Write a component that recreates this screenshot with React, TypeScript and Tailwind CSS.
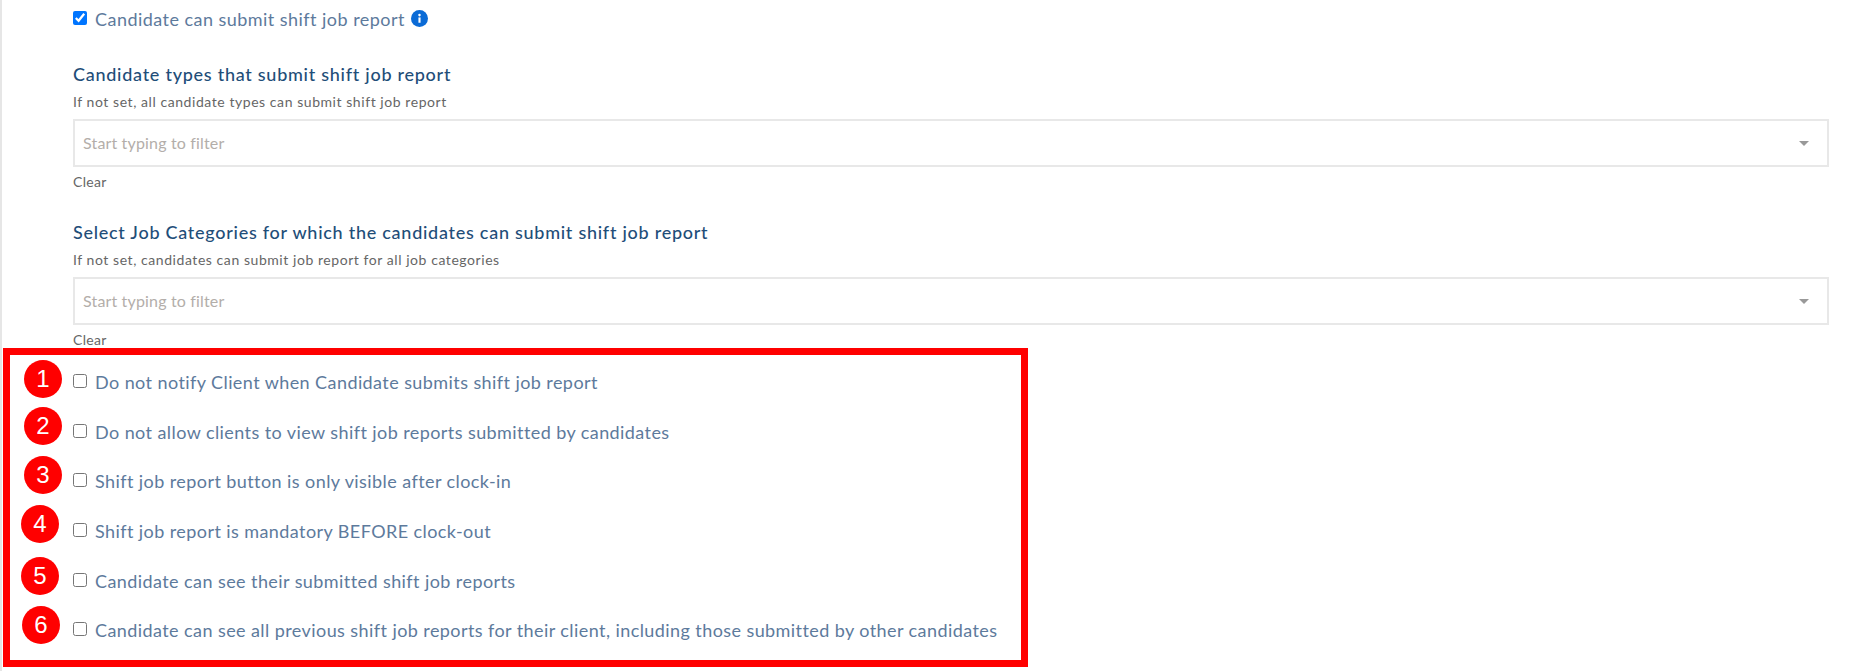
const FONT = "font-['Lato','Liberation_Sans',sans-serif]";

const OPTIONS = [
  { text: "Do not notify Client when Candidate submits shift job report", badge: "left-[14px] -translate-y-[4px]" },
  { text: "Do not allow clients to view shift job reports submitted by candidates", badge: "left-[14px] -translate-y-[6px]" },
  { text: "Shift job report button is only visible after clock-in", badge: "left-[14px] -translate-y-[7px]" },
  { text: "Shift job report is mandatory BEFORE clock-out", badge: "left-[11px] -translate-y-[8px]" },
  { text: "Candidate can see their submitted shift job reports", badge: "left-[11px] -translate-y-[5px]" },
  {
    text: "Candidate can see all previous shift job reports for their client, including those submitted by other candidates",
    badge: "left-[12px] -translate-y-[6px]",
  },
];

function FilterField({ title, hint }: { title: string; hint: string }) {
  return (
    <div className="pl-[71px] pr-[21px]">
      <h3 className="text-[18px] leading-[24px] font-medium text-[#1f4e79] tracking-[0.73px]">{title}</h3>
      <p className="mt-[6px] text-[14px] leading-[20px] text-[#666666] tracking-[0.56px]">{hint}</p>
      <div className="mt-[7px] flex h-[48px] items-center justify-between border-2 border-[#e8e8e8] pl-[8px] pr-[18px]">
        <span className="text-[16px] text-[#b3aeaa] tracking-[0.16px]">Start typing to filter</span>
        <span className="h-0 w-0 border-x-[5px] border-t-[5px] border-x-transparent border-t-[#999999]" />
      </div>
      <p className="mt-[5px] text-[14px] leading-[20px] text-[#666666] tracking-[0.3px]">Clear</p>
    </div>
  );
}

export default function App() {
  return (
    <div className={`${FONT} h-[671px] w-[1850px] overflow-hidden border-l-2 border-[#e6e6e6] bg-white`}>
      <label className="flex items-center gap-[8px] pl-[71px] pt-[7px] text-[18px] leading-[24px] text-[#5d7a9c]">
        <input type="checkbox" defaultChecked className="m-0 -mt-[3px] h-[14px] w-[14px]" />
        <span className="tracking-[0.46px]">Candidate can submit shift job report</span>
        <svg viewBox="0 0 16 16" className="-ml-[2px] -mt-[1px] h-[17px] w-[17px]">
          <circle cx="8" cy="8" r="8" fill="#0b6bd6" />
          <rect x="7" y="7" width="2" height="5" fill="#fff" />
          <circle cx="8" cy="4.8" r="1.2" fill="#fff" />
        </svg>
      </label>
      <div className="mt-[31px] flex flex-col gap-[28px]">
        <FilterField title="Candidate types that submit shift job report" hint="If not set, all candidate types can submit shift job report" />
        <FilterField title="Select Job Categories for which the candidates can submit shift job report" hint="If not set, candidates can submit job report for all job categories" />
      </div>
      <div className="relative ml-px -mt-[2px] h-[319px] w-[1025px] border-[7px] border-[#ff0000] pl-[63px] pt-[3px]">
        {OPTIONS.map((o, i) => (
          <div key={o.text} className="flex h-[49.6px] items-center gap-[8px] text-[18px] text-[#5d7a9c]">
            <input type="checkbox" className="m-0 -mt-[3px] h-[14px] w-[14px]" />
            <span className="tracking-[0.42px]">{o.text}</span>
            <span
              className={`absolute flex h-[38px] w-[38px] items-center justify-center rounded-full bg-[#ff0000] font-['Liberation_Sans',sans-serif] text-[24px] text-white ${o.badge}`}
            >
              {i + 1}
            </span>
          </div>
        ))}
      </div>
    </div>
  );
}
